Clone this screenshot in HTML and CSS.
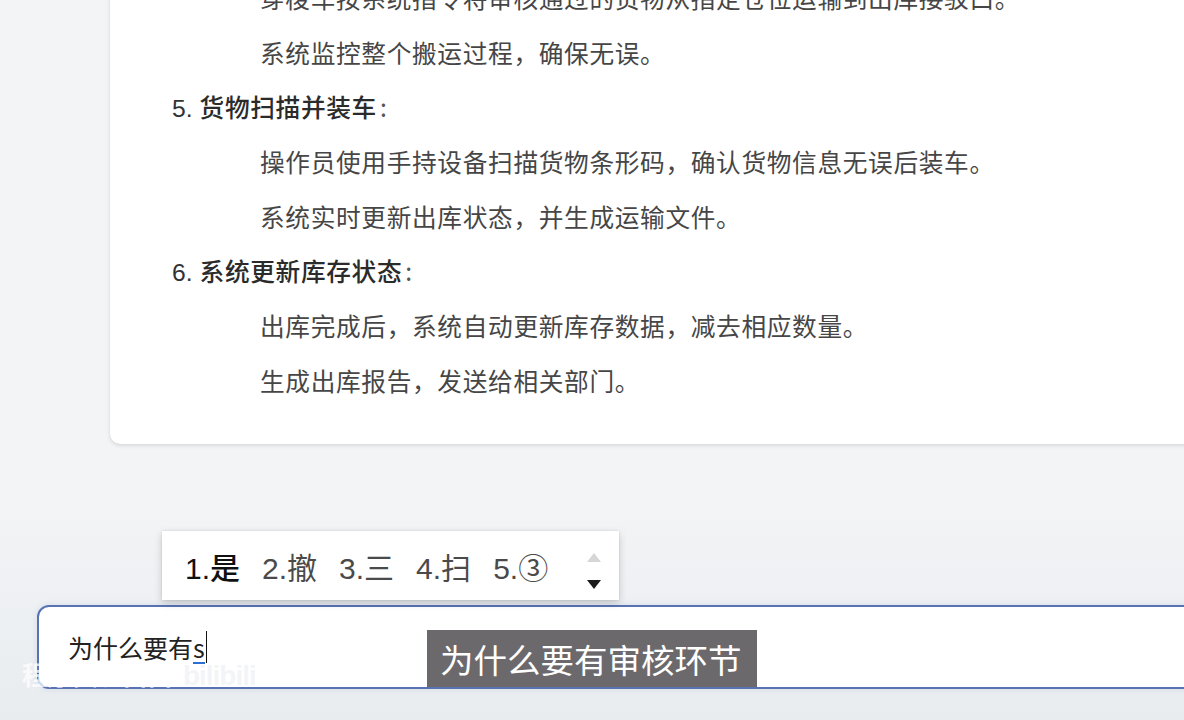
FILE: index.html
```html
<!DOCTYPE html>
<html lang="zh-CN">
<head>
<meta charset="utf-8">
<title>出库流程</title>
<link rel="stylesheet" href="styles.css">
</head>
<body>
<div class="page">
  <section class="card">
    <div class="sub">穿梭车按系统指令将审核通过的货物从指定仓位运输到出库接驳口。</div>
    <div class="sub">系统监控整个搬运过程，确保无误。</div>
    <div class="item"><span class="num">5.</span><b>货物扫描并装车</b><span class="colon">:</span></div>
    <div class="sub">操作员使用手持设备扫描货物条形码，确认货物信息无误后装车。</div>
    <div class="sub">系统实时更新出库状态，并生成运输文件。</div>
    <div class="item"><span class="num">6.</span><b>系统更新库存状态</b><span class="colon">:</span></div>
    <div class="sub">出库完成后，系统自动更新库存数据，减去相应数量。</div>
    <div class="sub">生成出库报告，发送给相关部门。</div>
  </section>

  <div class="composer">
    <span class="typed">为什么要有</span><span class="comp">s</span><span class="caret"></span>
  </div>

  <div class="ime">
    <div class="cands">
      <span class="cand first">1.是</span>
      <span class="cand">2.撤</span>
      <span class="cand">3.三</span>
      <span class="cand">4.扫</span>
      <span class="cand">5.③</span>
    </div>
    <div class="pager">
      <span class="tri up"></span>
      <span class="tri down"></span>
    </div>
  </div>

  <div class="subtitle">为什么要有审核环节</div>
  <div class="watermark">程序员小白白 <span class="bili">bilibili</span></div>
</div>
</body>
</html>
```

FILE: styles.css
```css
* { box-sizing: border-box; }
html, body {
  margin: 0;
  padding: 0;
  width: 1184px;
  height: 720px;
  overflow: hidden;
}
body {
  font-family: "Noto Sans CJK SC", "Noto Sans", sans-serif;
  background: linear-gradient(180deg, #f3f4f6 0%, #f2f4f6 70%, #e9ecef 100%);
}
.page {
  position: relative;
  width: 1184px;
  height: 720px;
  display: flex;
  flex-direction: column;
}
.card {
  margin-top: -52px;
  margin-left: 110px;
  margin-right: -40px;
  padding: 22px 0 36px 0;
  background: #ffffff;
  border-radius: 10px;
  box-shadow: 0 2px 4px rgba(0,0,0,0.10), 0 0 1px rgba(0,0,0,0.12);
  font-size: 24.7px;
  letter-spacing: 0.65px;
}
.sub, .item {
  height: 54.7px;
  line-height: 54.7px;
  white-space: nowrap;
}
.sub {
  padding-left: 150px;
  color: #464646;
}
.item {
  padding-left: 62px;
  color: #2e2e2e;
}
.item .num {
  font-family: "Liberation Sans", "Noto Sans CJK SC", sans-serif;
  font-weight: 400;
  margin-right: 7px;
  color: #333;
  letter-spacing: 0;
}
.item b {
  font-weight: 500;
  color: #2b2b2b;
}
.colon {
  color: #555;
  margin-left: 3px;
}
.composer {
  margin-top: 161px;
  margin-left: 37px;
  margin-right: -30px;
  height: 84px;
  background: #ffffff;
  border: 2px solid #5872b4;
  border-radius: 12px;
  box-shadow: 0 0 6px rgba(88,114,180,0.15);
  display: flex;
  align-items: center;
  padding-left: 29px;
  font-size: 25px;
  color: #222;
}
.comp {
  position: relative;
  display: inline-block;
}
.comp::after {
  content: "";
  position: absolute;
  left: 0;
  right: 0;
  bottom: 1px;
  height: 2px;
  background: #2a6fd1;
}
.caret {
  display: inline-block;
  width: 1.5px;
  height: 32px;
  background: #111;
  margin-left: 1px;
}
.ime {
  position: absolute;
  left: 162px;
  top: 531px;
  width: 457px;
  height: 69px;
  background: #ffffff;
  box-shadow: 0 3px 8px rgba(0,0,0,0.18), 0 0 2px rgba(0,0,0,0.10);
  display: flex;
  align-items: center;
  padding-left: 23px;
  padding-right: 18px;
}
.cands {
  display: flex;
  gap: 22px;
  font-size: 30px;
  color: #4a4a4a;
  flex: 1;
}
.cand {
  font-family: "Liberation Sans", "Noto Sans CJK SC", sans-serif;
}
.cand.first {
  color: #111;
  font-weight: 500;
}
.pager {
  display: flex;
  flex-direction: column;
  justify-content: space-between;
  align-items: center;
  height: 36px;
  margin-top: 10px;
}
.tri {
  width: 0;
  height: 0;
  border-left: 7px solid transparent;
  border-right: 7px solid transparent;
}
.tri.up {
  border-bottom: 9px solid #d6d6d6;
}
.tri.down {
  border-top: 9px solid #1a1a1a;
}
.subtitle {
  position: absolute;
  left: 427px;
  top: 630px;
  width: 330px;
  height: 57px;
  background: #6c696c;
  color: #ffffff;
  font-size: 33.5px;
  line-height: 57px;
  padding-left: 13px;
  white-space: nowrap;
}
.watermark {
  position: absolute;
  left: 22px;
  top: 657px;
  font-size: 26px;
  line-height: 34px;
  color: rgba(255,255,255,0.75);
  font-weight: 700;
  white-space: nowrap;
  letter-spacing: -1px;
}
.watermark .bili {
  font-family: "Liberation Sans", sans-serif;
  font-weight: 700;
  font-size: 28px;
  margin-left: 6px;
  color: rgba(240,242,245,0.8);
}
```
